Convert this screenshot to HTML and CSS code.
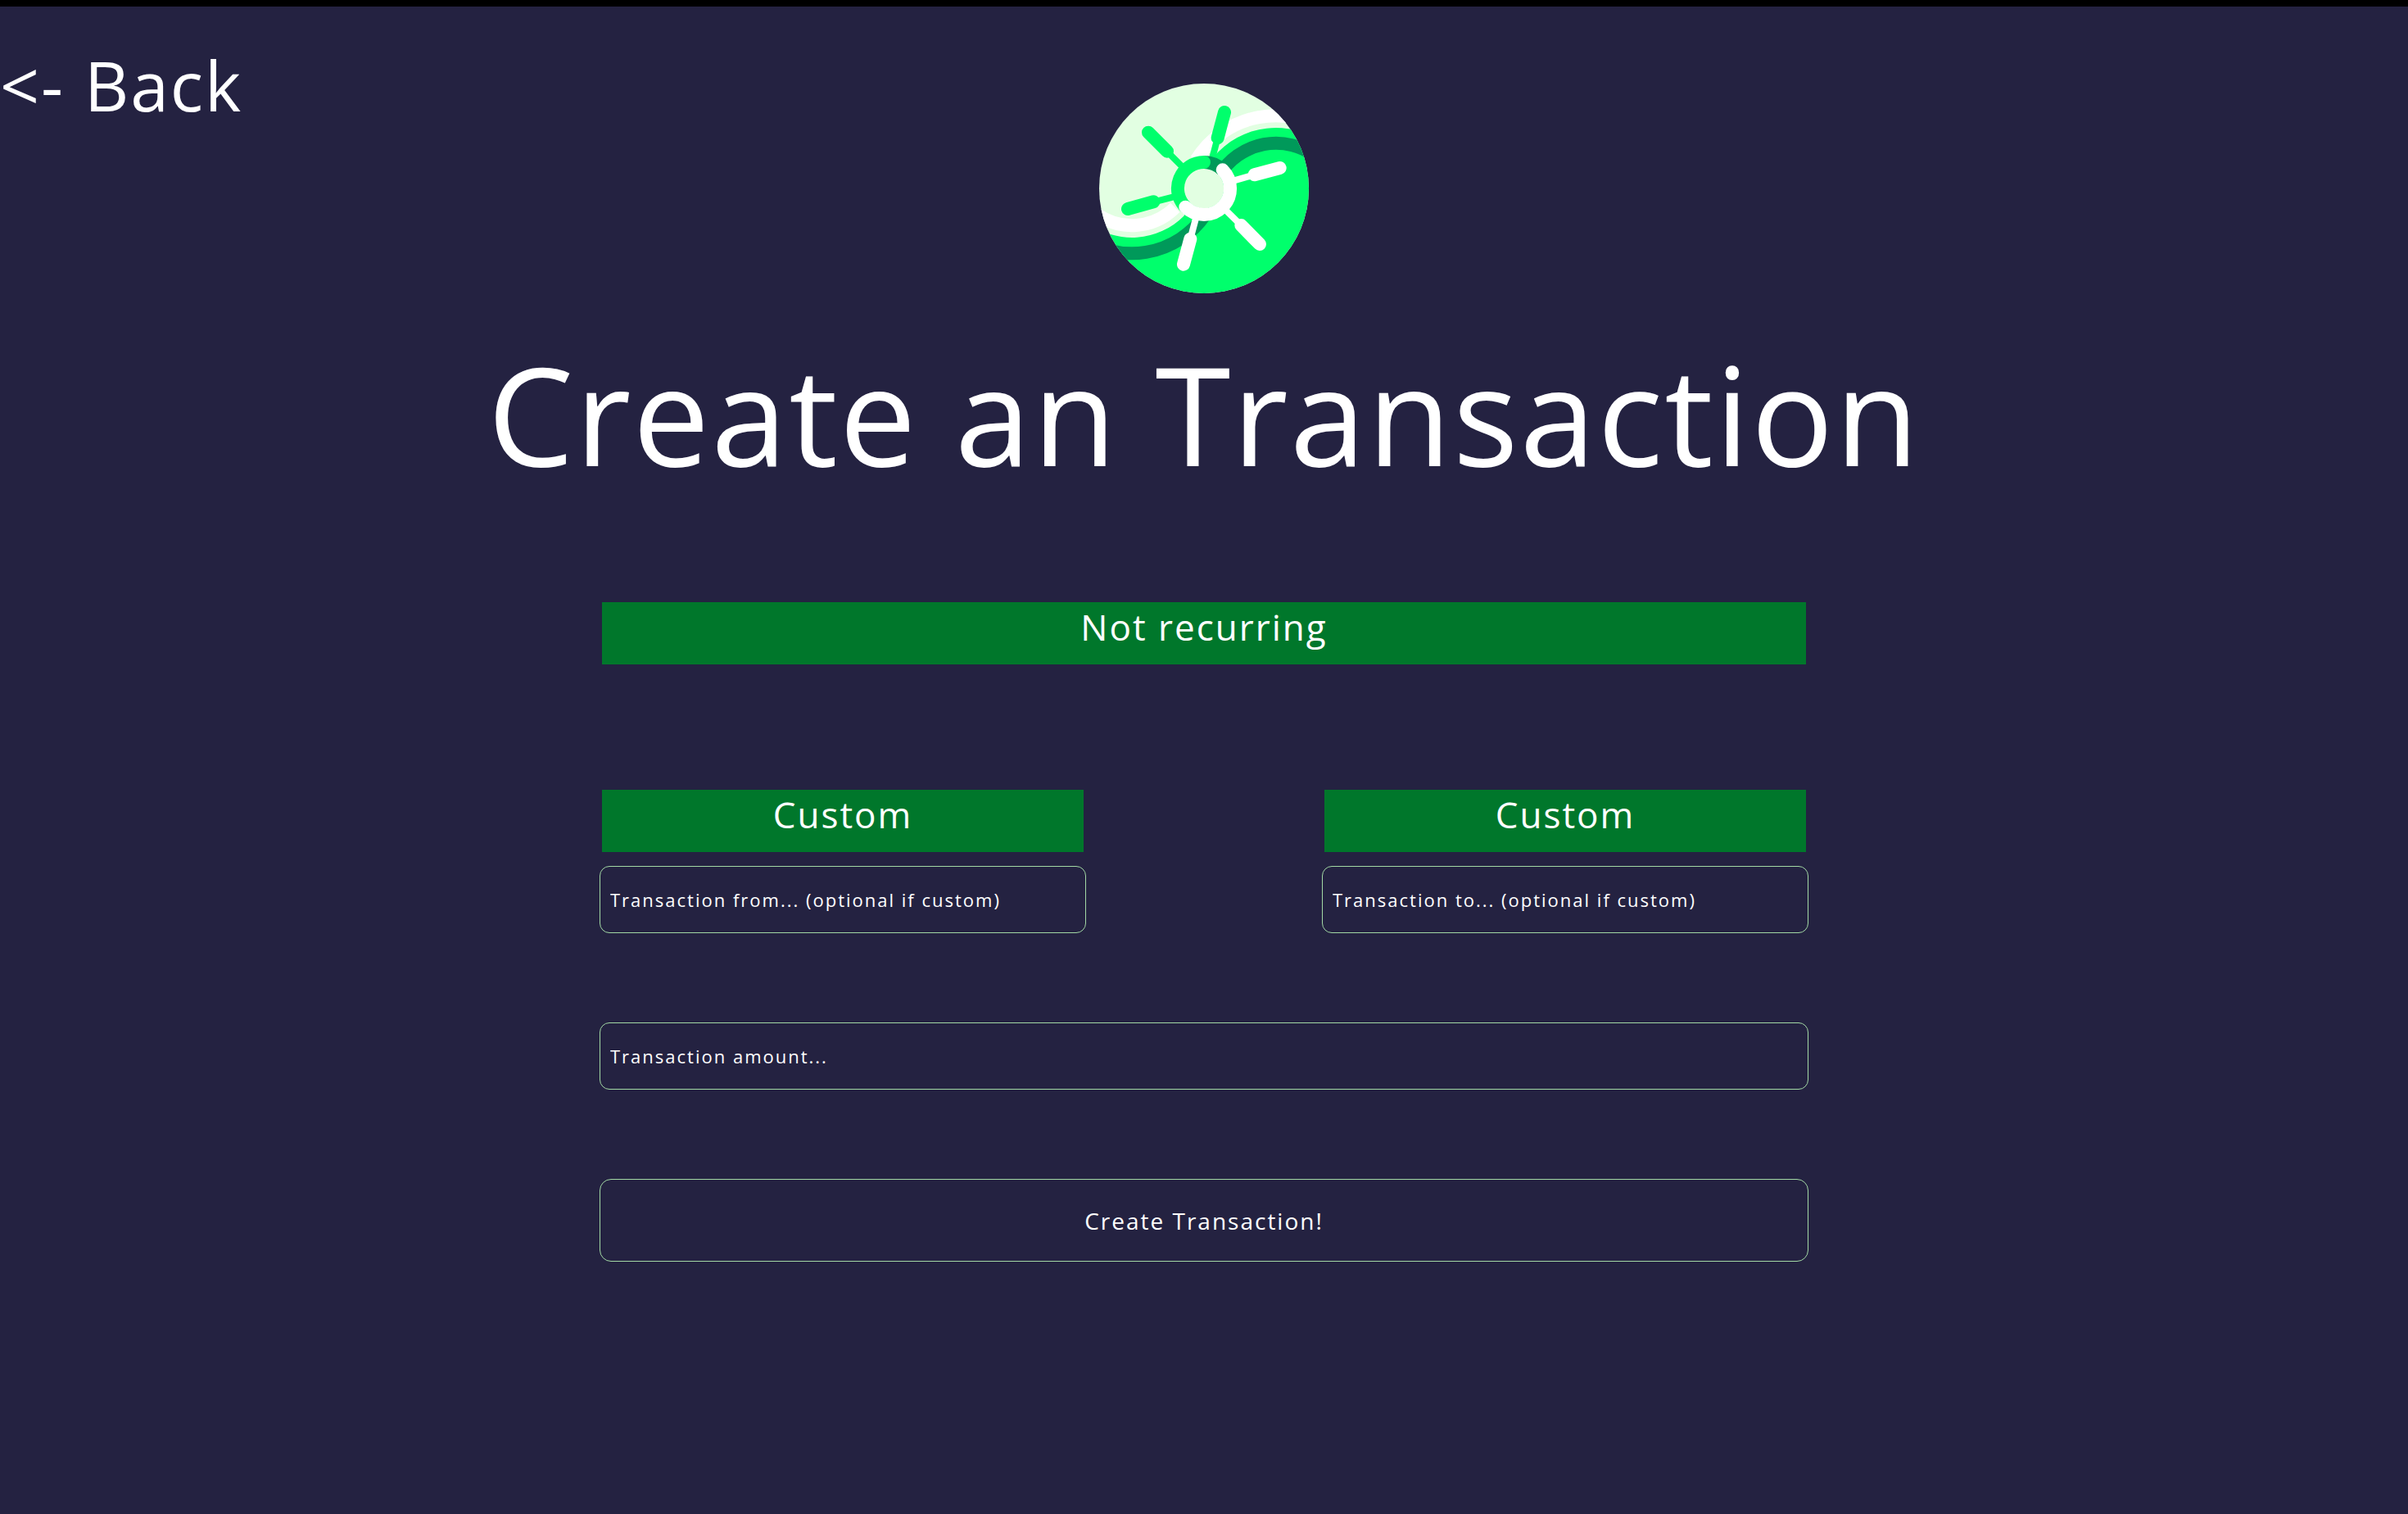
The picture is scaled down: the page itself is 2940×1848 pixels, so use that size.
FILE: index.html
```html
<!DOCTYPE html>
<html lang="en">
<head>
<meta charset="utf-8">
<meta name="viewport" content="width=device-width, initial-scale=1">
<title>Create an Transaction</title>
<link rel="stylesheet" href="styles.css">
</head>
<body>
<nav class="nav"><a class="back" href="#">&lt;- Back</a></nav>
<main class="page">
  <svg class="logo" viewBox="36 36 768 768" fill="none" aria-hidden="true">
    <clipPath id="disc"><circle cx="420" cy="420" r="384"/></clipPath>
    <g clip-path="url(#disc)">
      <rect x="36" y="36" width="768" height="768" fill="#e2ffe2"/>
      <path fill="#00ff6c" d="M-5 546A268 268 0 0 0 346 521L454 306A299 299 0 0 1 864 258V864H-5Z"/>
      <g stroke-width="48">
        <path stroke="#fff" d="M22 511A224 224 0 0 0 314 490"/>
        <path stroke="#fff" d="M392 315A343 343 0 0 1 890 223"/>
        <path stroke="#00995a" d="M-40 593A326 326 0 0 0 423 518"/>
        <path stroke="#00995a" d="M478 369A242 242 0 0 1 829 303"/>
      </g>
    </g>
    <g stroke="#00ff6c" stroke-linecap="round">
      <path stroke-width="24" d="M448 318L470 235M345 345L285 285M320 448L235 470"/>
      <path stroke-width="48" d="M470 235L495 141M285 284L216 215M235 469L141 495"/>
    </g>
    <g stroke="#fff" stroke-linecap="round">
      <path stroke-width="24" d="M520 394L605 370M495 495L556 555M392 522L370 605"/>
      <path stroke-width="48" d="M605 370L698 345M556 555L624 624M370 605L345 698"/>
    </g>
    <circle cx="420" cy="420" r="73" fill="#e2ffe2"/>
    <g stroke-width="48" stroke-linecap="round">
      <path stroke="#00995a" stroke-linecap="butt" d="M420 324A96 96 0 0 1 488 352"/>
      <path stroke="#00ff6c" d="M420 324A96 96 0 0 0 352 488"/>
      <path stroke="#fff" d="M488 352A96 96 0 0 1 488 488A96 96 0 0 1 352 488"/>
    </g>
  </svg>
  <h1 class="title">Create an Transaction</h1>
  <form class="form">
    <select class="choice" aria-label="Recurrence"><option>Not recurring</option></select>
    <div class="parties">
      <div class="party">
        <select class="choice" aria-label="From account"><option>Custom</option></select>
        <input class="field" type="text" aria-label="Transaction from" placeholder="Transaction from... (optional if custom)">
      </div>
      <div class="party">
        <select class="choice" aria-label="To account"><option>Custom</option></select>
        <input class="field" type="text" aria-label="Transaction to" placeholder="Transaction to... (optional if custom)">
      </div>
    </div>
    <input class="field amount" type="text" aria-label="Transaction amount" placeholder="Transaction amount...">
    <button class="field submit" type="button">Create Transaction!</button>
  </form>
</main>
</body>
</html>
```
FILE: styles.css
```css
* { box-sizing: border-box; }
body {
  margin: 0;
  min-height: 100vh;
  border-top: 8px solid #000;
  background: #242241;
  color: #fff;
  font-family: "Open Sans", "Noto Sans", sans-serif;
  letter-spacing: 2px;
}
.nav { height: 94px; padding-top: 36px; }
.back {
  color: inherit;
  font-size: 84px;
  line-height: 120px;
  text-decoration: none;
}
.page { display: flex; flex-direction: column; align-items: center; }
.logo { width: 256px; height: 256px; }
.title {
  margin: 32px 0 0;
  font-size: 167px;
  font-weight: 400;
  line-height: 230px;
  text-align: center;
}
.form {
  display: flex;
  flex-direction: column;
  width: 50%;
  margin-top: 115px;
}
.choice, .field {
  color: inherit;
  font-family: inherit;
  letter-spacing: inherit;
}
.choice {
  appearance: none;
  width: 100%;
  height: 76px;
  padding: 0 0 18px;
  border: 0;
  border-radius: 0;
  background: #00772b;
  font-size: 44px;
  line-height: 60px;
  text-align: center;
  text-align-last: center;
}
.parties {
  display: grid;
  grid-template-columns: 1fr 1fr;
  column-gap: 20%;
  margin-top: 153px;
}
.party { display: flex; flex-direction: column; gap: 17px; }
.field {
  align-self: stretch;
  height: 82px;
  margin: 0 -3px;
  padding: 0 12px;
  border: 1px solid #a3d9a5;
  border-radius: 12px;
  background: transparent;
  font-size: 22px;
}
.field::placeholder { color: #fff; opacity: 1; }
.amount { margin-top: 109px; }
.submit {
  height: 101px;
  margin-top: 109px;
  border-radius: 14px;
  font-size: 28px;
}
```
